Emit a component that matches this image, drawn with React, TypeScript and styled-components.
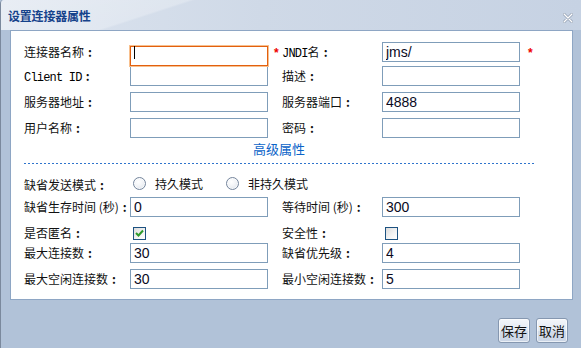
import React from "react";
import styled, { createGlobalStyle } from "styled-components";

const GlobalStyle = createGlobalStyle`
  html, body { margin: 0; padding: 0; background: #b1c2d8; }
  body { font-family: "Noto Sans CJK SC", "Liberation Sans", sans-serif; }
`;

const CJK = `"Noto Sans CJK SC", "Liberation Sans", sans-serif`;

const Window = styled.div`
  position: relative;
  width: 581px;
  height: 348px;
  box-sizing: border-box;
  border-left: 1px solid #7b899d;
  border-top-left-radius: 4px;
  background: #b1c2d8;
  display: flex;
  flex-direction: column;
  overflow: hidden;
`;

const TitleBar = styled.div`
  height: 30px;
  flex: none;
  display: flex;
  align-items: center;
  padding-left: 7px;
  background:
    linear-gradient(162deg, rgba(255,255,255,0.35) 0%, rgba(255,255,255,0.25) 28%, rgba(255,255,255,0) 29%),
    linear-gradient(to right, #dce4ef 0%, #cfd9e7 45%, #c6d2e3 100%);
`;

const Title = styled.span`
  font: bold 12px ${CJK};
  color: #15428b;
  letter-spacing: -0.2px;
`;

const CloseBox = styled.div`
  margin-left: auto;
  margin-right: 8px;
  align-self: flex-start;
  margin-top: 4px;
  width: 10px;
  height: 10px;
`;

const Body = styled.div`
  padding: 0 8px 0 9px;
`;

const Panel = styled.div`
  height: 270px;
  box-sizing: border-box;
  border: 1px solid #8ea6c4;
  background: #fff;
  padding: 9px 0 9px 13px;
  display: flex;
  flex-direction: column;
`;

const Section = styled.div<{ $top?: number }>`
  display: flex;
  flex-direction: column;
  gap: 6px;
  margin-top: ${(p) => p.$top ?? 0}px;
`;

const Row = styled.div<{ $h?: number }>`
  display: grid;
  grid-template-columns: 106px 138px 14px 100px 138px 14px;
  align-items: center;
  height: ${(p) => p.$h ?? 20}px;
`;

const Label = styled.span`
  font: 12px ${CJK};
  color: #111;
  white-space: nowrap;
  line-height: 20px;
`;

const Colon = styled.span`
  display: inline-block;
  width: 12px;
  text-align: center;
  &::before { content: ":"; font-weight: bold; }
`;

const Mono = styled.span`
  font: 12px "Liberation Mono", "DejaVu Sans Mono", monospace;
  letter-spacing: -0.8px;
  color: #000;
`;

const Input = styled.input<{ $focus?: boolean }>`
  width: 138px;
  height: 20px;
  box-sizing: border-box;
  margin: 0;
  border: 1px solid ${(p) => (p.$focus ? "#e2600f" : "#7f9db9")};
  box-shadow: ${(p) => (p.$focus ? "0 0 0 1px #f8c08e" : "none")};
  padding: 0 3px;
  font: 14px "Liberation Sans", Arial, sans-serif;
  color: #0a0a1e;
  background: #fff;
  outline: none;
`;

const FocusWrap = styled.div`
  position: relative;
  width: 138px;
  height: 20px;
  &::after {
    content: "";
    position: absolute;
    left: 4px;
    top: 4px;
    width: 1px;
    height: 13px;
    background: #000;
  }
`;

const Required = styled.span<{ $pl?: number }>`
  color: #e00;
  font: bold 12px "Liberation Sans", Arial, sans-serif;
  padding-left: ${(p) => p.$pl ?? 6}px;
  line-height: 20px;
  padding-top: 3px;
`;

const LinkRow = styled.div`
  margin-top: 4px;
  width: 510px;
  height: 14px;
  display: flex;
  justify-content: center;
  align-items: center;
`;

const Link = styled.a`
  font: 13px ${CJK};
  color: #0b64c8;
  text-decoration: none;
  cursor: pointer;
  line-height: 14px;
`;

const Divider = styled.div`
  margin-top: 7px;
  width: 510px;
  height: 1px;
  flex: none;
  background: repeating-linear-gradient(to right, #2f74cc 0 2px, transparent 2px 4px);
`;

const RadioRow = styled.div`
  margin-top: 9px;
  height: 20px;
  display: flex;
  align-items: center;
`;

const RadioLabelCell = styled.div`
  width: 106px;
  flex: none;
`;

const RadioOption = styled.label<{ $ml: number }>`
  display: inline-flex;
  align-items: center;
  gap: 9px;
  margin-left: ${(p) => p.$ml}px;
  font: 12px ${CJK};
  color: #111;
`;

const RadioDot = styled.span`
  width: 13px;
  height: 13px;
  box-sizing: border-box;
  border-radius: 50%;
  border: 1px solid #74859c;
  background: radial-gradient(circle at 40% 35%, #ffffff 0%, #f2f4f7 45%, #d3dae4 100%);
  box-shadow: inset 0 0 0 1px rgba(255,255,255,0.7);
`;

const CheckBox = styled.span`
  width: 13px;
  height: 13px;
  box-sizing: border-box;
  margin-left: 3px;
  border: 1px solid #1d5281;
  background: linear-gradient(135deg, #dcdcdc 0%, #f4f4f4 60%, #ffffff 100%);
  display: flex;
  align-items: center;
  justify-content: center;
`;

const Footer = styled.div`
  display: flex;
  justify-content: flex-end;
  gap: 6px;
  padding: 18px 13px 0 0;
`;

const Button = styled.button`
  width: 32px;
  height: 25px;
  box-sizing: border-box;
  padding: 0;
  border: 1px solid #8597b0;
  border-radius: 3px;
  background: linear-gradient(to bottom, #f3f6fa 0%, #e2e9f2 50%, #d3dcea 51%, #cbd6e6 100%);
  font: 13px ${CJK};
  color: #111;
  box-shadow: inset 0 0 0 1px rgba(255,255,255,0.6);
`;

const Grip = styled.div`
  position: absolute;
  right: 0;
  bottom: 0;
  width: 10px;
  height: 10px;
`;

const CloseIcon = () => (
  <svg width="10" height="10" viewBox="0 0 10 10">
    <path d="M1 1 L9 9 M9 1 L1 9" stroke="#8c9aae" strokeWidth="2.6" strokeLinecap="round" />
    <path d="M1 1 L9 9 M9 1 L1 9" stroke="#ffffff" strokeWidth="1.4" strokeLinecap="round" />
  </svg>
);

const CheckIcon = () => (
  <svg width="9" height="8" viewBox="0 0 9 8">
    <path d="M1 4 L3.5 6.5 L8 1.5" stroke="#2e9a2b" strokeWidth="2" fill="none" />
  </svg>
);

const GripIcon = () => (
  <svg width="10" height="10" viewBox="0 0 10 10">
    <path d="M9 2 L2 9 M9 5 L5 9 M9 8 L8 9" stroke="#7a92b4" strokeWidth="1" />
  </svg>
);

export default function App() {
  return (
    <>
      <GlobalStyle />
      <Window>
        <TitleBar>
          <Title>设置连接器属性</Title>
          <CloseBox>
            <CloseIcon />
          </CloseBox>
        </TitleBar>
        <Body>
          <Panel>
            <Section>
              <Row>
                <Label>连接器名称<Colon /></Label>
                <FocusWrap>
                  <Input $focus defaultValue="" />
                </FocusWrap>
                <Required>*</Required>
                <Label>
                  <Mono>JNDI</Mono>名<Colon />
                </Label>
                <Input defaultValue="jms/" />
                <Required $pl={8}>*</Required>
              </Row>
              <Row>
                <Label>
                  <Mono>Client ID</Mono><Colon />
                </Label>
                <Input />
                <span />
                <Label>描述<Colon /></Label>
                <Input />
              </Row>
              <Row>
                <Label>服务器地址<Colon /></Label>
                <Input />
                <span />
                <Label>服务器端口<Colon /></Label>
                <Input defaultValue="4888" />
              </Row>
              <Row>
                <Label>用户名称<Colon /></Label>
                <Input />
                <span />
                <Label>密码<Colon /></Label>
                <Input />
              </Row>
            </Section>
            <LinkRow>
              <Link>高级属性</Link>
            </LinkRow>
            <Divider />
            <RadioRow>
              <RadioLabelCell>
                <Label>缺省发送模式<Colon /></Label>
              </RadioLabelCell>
              <RadioOption $ml={3}>
                <RadioDot />
                持久模式
              </RadioOption>
              <RadioOption $ml={23}>
                <RadioDot />
                非持久模式
              </RadioOption>
            </RadioRow>
            <Section $top={4}>
              <Row>
                <Label>缺省生存时间 (秒)<Colon /></Label>
                <Input defaultValue="0" />
                <span />
                <Label>等待时间 (秒)<Colon /></Label>
                <Input defaultValue="300" />
              </Row>
              <Row $h={14}>
                <Label>是否匿名<Colon /></Label>
                <CheckBox>
                  <CheckIcon />
                </CheckBox>
                <span />
                <Label>安全性<Colon /></Label>
                <CheckBox />
              </Row>
              <Row>
                <Label>最大连接数<Colon /></Label>
                <Input defaultValue="30" />
                <span />
                <Label>缺省优先级<Colon /></Label>
                <Input defaultValue="4" />
              </Row>
              <Row>
                <Label>最大空闲连接数<Colon /></Label>
                <Input defaultValue="30" />
                <span />
                <Label>最小空闲连接数<Colon /></Label>
                <Input defaultValue="5" />
              </Row>
            </Section>
          </Panel>
        </Body>
        <Footer>
          <Button>保存</Button>
          <Button>取消</Button>
        </Footer>
        <Grip>
          <GripIcon />
        </Grip>
      </Window>
    </>
  );
}
